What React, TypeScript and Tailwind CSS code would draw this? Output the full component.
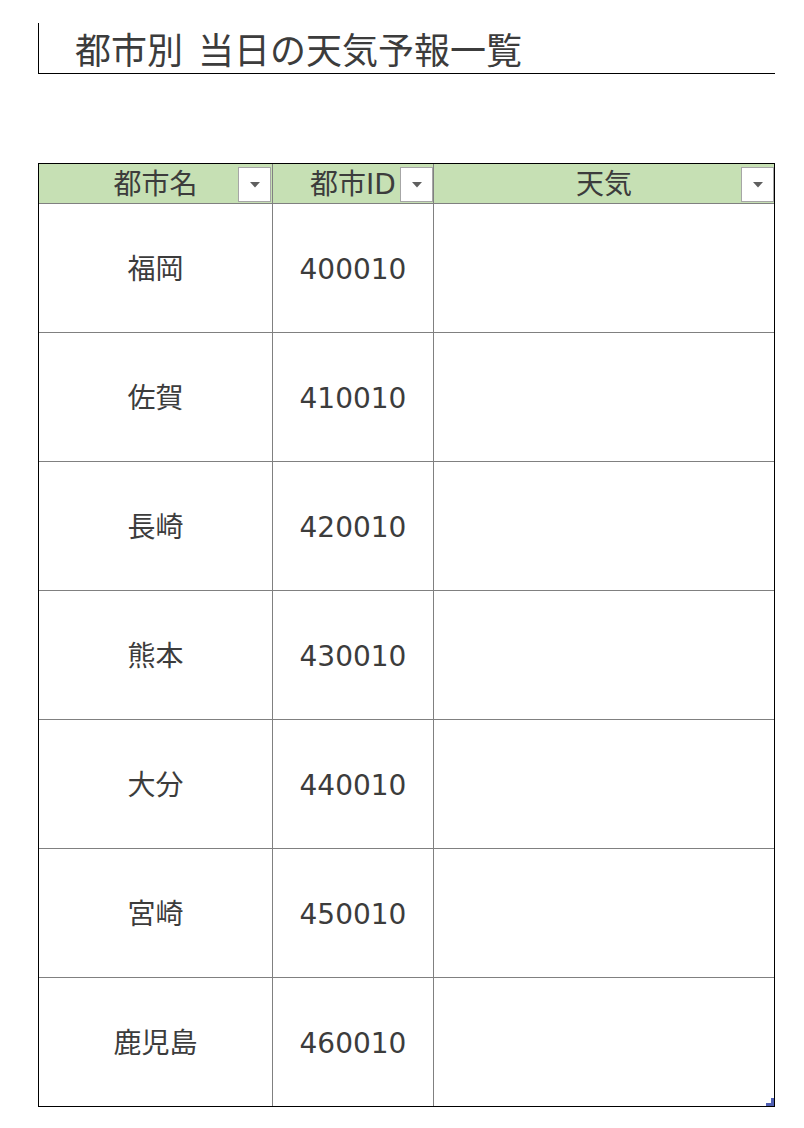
const rows = [
  { city: '福岡', id: '400010' },
  { city: '佐賀', id: '410010' },
  { city: '長崎', id: '420010' },
  { city: '熊本', id: '430010' },
  { city: '大分', id: '440010' },
  { city: '宮崎', id: '450010' },
  { city: '鹿児島', id: '460010' },
];

const font = 'font-["DejaVu_Sans","Noto_Sans_CJK_JP",sans-serif]';

function FilterButton({ className }: { className: string }) {
  return (
    <div
      className={`absolute top-[3px] w-[33px] h-[35px] bg-white border border-[#a6a6a6] flex items-center justify-center ${className}`}
    >
      <svg width="10" height="6" viewBox="0 0 10 6">
        <path d="M0 0h10L5 5.5z" fill="#5f5f5f" />
      </svg>
    </div>
  );
}

export default function App() {
  return (
    <div className={`min-h-[1128px] bg-white pl-[38px] pt-[23px] text-[#3c3c3c] ${font}`}>
      {/* Title */}
      <div className="w-[737px] h-[51px] border-l border-b border-black flex items-center pl-[36px]">
        <h1 className="flex gap-[15px] text-[36px] leading-none font-['Noto_Sans_CJK_JP',sans-serif] text-[#3c3c3c]">
          <span>都市別</span>
          <span>当日の天気予報一覧</span>
        </h1>
      </div>

      {/* Table */}
      <div className="relative mt-[89px] w-[737px] border border-black">
        <div className="grid grid-cols-[234px_161px_1fr] h-[40px] bg-[#c6e0b4] border-b border-[#808080] text-[28px]">
          <div className="relative flex items-center justify-center border-r border-[#808080]">
            都市名
            <FilterButton className="right-[1px]" />
          </div>
          <div className="relative flex items-center justify-center border-r border-[#808080]">
            都市ID
            <FilterButton className="right-0" />
          </div>
          <div className="relative flex items-center justify-center">
            天気
            <FilterButton className="right-0" />
          </div>
        </div>

        {rows.map((r, i) => (
          <div
            key={r.id}
            className={`grid grid-cols-[234px_161px_1fr] text-[28px] ${
              i < rows.length - 1 ? 'h-[129px] border-b border-[#808080]' : 'h-[128px]'
            }`}
          >
            <div className="flex items-center justify-center pt-[3px] border-r border-[#808080]">{r.city}</div>
            <div className="flex items-center justify-center pt-[3px] border-r border-[#808080]">{r.id}</div>
            <div />
          </div>
        ))}

        {/* resize handle */}
        <svg className="absolute right-0 bottom-0" width="8" height="8" viewBox="0 0 8 8">
          <path d="M5 0h3v8H0V5h5z" fill="#4f5fb3" />
        </svg>
      </div>
    </div>
  );
}
